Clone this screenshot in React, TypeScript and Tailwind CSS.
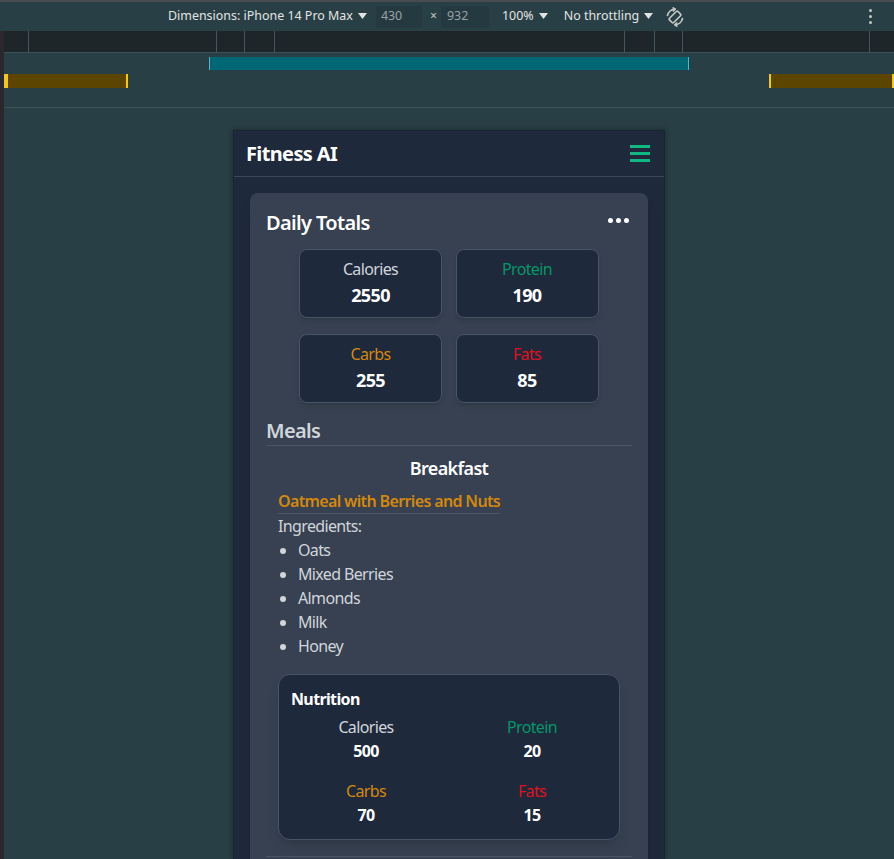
import React from 'react';

const ticks = [24, 212, 240, 270, 620, 650, 678, 865];

const totals = [
  { label: 'Calories', value: '2550', color: 'text-[#d1d5db]' },
  { label: 'Protein', value: '190', color: 'text-[#059669]' },
  { label: 'Carbs', value: '255', color: 'text-[#d4880b]' },
  { label: 'Fats', value: '85', color: 'text-[#e0111f]' },
];

const mealNutrition = [
  { label: 'Calories', value: '500', color: 'text-[#d1d5db]' },
  { label: 'Protein', value: '20', color: 'text-[#059669]' },
  { label: 'Carbs', value: '70', color: 'text-[#d4880b]' },
  { label: 'Fats', value: '15', color: 'text-[#e0111f]' },
];

const ingredients = ['Oats', 'Mixed Berries', 'Almonds', 'Milk', 'Honey'];

const Caret = () => (
  <svg width="9" height="6" viewBox="0 0 9 6" className="ml-[5px]">
    <path d="M0 0 L9 0 L4.5 6 Z" fill="#e3e3e3" />
  </svg>
);

const DevToolbar: React.FC = () => (
  <div className="h-[31px] bg-[#283f45] border-t-2 border-[#4a4d50] flex items-center pl-[168px] pr-[22px] text-[12.45px] tracking-normal text-[#e3e3e3]">
    <span className="flex items-center">
      Dimensions: iPhone 14 Pro Max
      <Caret />
    </span>
    <span className="ml-[9px] w-[46px] h-[22px] bg-[#243a40] text-[#9aa0a6] flex items-center pl-[5px]">430</span>
    <span className="ml-[8px] text-[#c4c7c5]">×</span>
    <span className="ml-[4px] w-[48px] h-[22px] bg-[#243a40] text-[#9aa0a6] flex items-center pl-[6px]">932</span>
    <span className="ml-[13px] flex items-center">
      100%
      <Caret />
    </span>
    <span className="ml-[16px] flex items-center">
      No throttling
      <Caret />
    </span>
    {/* rotate icon */}
    <svg width="22" height="22" viewBox="0 0 22 22" className="ml-[11px]" fill="none" stroke="#c4c7c5" strokeWidth="1.7" strokeLinecap="round">
      <rect x="8" y="5" width="6" height="12" rx="1.2" transform="rotate(45 11 11)" />
      <path d="M3.5 9.5 A7.8 7.8 0 0 1 11 3.2" />
      <path d="M11 3.2 L9.2 1.8 M11 3.2 L9.4 4.8" />
      <path d="M18.5 12.5 A7.8 7.8 0 0 1 11 18.8" />
      <path d="M11 18.8 L12.8 20.2 M11 18.8 L12.6 17.2" />
    </svg>
    <div className="ml-auto flex flex-col gap-[3px]">
      <span className="w-[3px] h-[3px] rounded-full bg-[#c4c7c5]" />
      <span className="w-[3px] h-[3px] rounded-full bg-[#c4c7c5]" />
      <span className="w-[3px] h-[3px] rounded-full bg-[#c4c7c5]" />
    </div>
  </div>
);

const Ruler: React.FC = () => (
  <div className="relative h-[22px] bg-[#1f2629] border-b border-[#3d5357]">
    {ticks.map((x) => (
      <div key={x} className="absolute top-0 bottom-0 w-px bg-[#44585c]" style={{ left: x }} />
    ))}
  </div>
);

const MediaBars: React.FC = () => (
  <div className="relative h-[55px] border-b border-[#3e565a]">
    <div className="absolute top-[4px] left-[205px] w-[480px] h-[13px] bg-[#006775] border-x border-[#4fb7c2]" />
    <div className="absolute top-[21px] left-0 w-[124px] h-[14px] bg-[#5c4500] border-l-4 border-r-2 border-[#f5c518]" />
    <div className="absolute top-[21px] left-[765px] w-[125px] h-[14px] bg-[#5c4500] border-x-2 border-[#f5c518]" />
  </div>
);

const StatBox = ({ label, value, color }: { label: string; value: string; color: string }) => (
  <div className="w-[143px] h-[69px] bg-[#1e293b] border border-[#475569] rounded-lg shadow-md flex flex-col items-center pt-[7px]">
    <span className={`text-base leading-6 ${color}`}>{label}</span>
    <span className="text-lg leading-7 font-bold text-white">{value}</span>
  </div>
);

const PhoneApp: React.FC = () => (
  <div className="w-[432px] mx-auto mt-[22px] bg-[#1e293b] border-x border-t border-[#1b2530] shadow-[0_0_6px_rgba(0,0,0,0.35)] h-[730px] overflow-hidden tracking-[-0.04em]">
    {/* Header */}
    <div className="h-[46px] flex items-center justify-between px-3 border-b border-[#3b4758]">
      <span className="text-xl font-bold text-white">Fitness AI</span>
      <div className="flex flex-col gap-[4px] mr-[2px]">
        <span className="w-[20px] h-[3px] bg-[#10b981]" />
        <span className="w-[20px] h-[3px] bg-[#10b981]" />
        <span className="w-[20px] h-[3px] bg-[#10b981]" />
      </div>
    </div>

    <div className="p-4">
      <div className="bg-[#374151] rounded-lg shadow-lg p-4 pb-10">
        <div className="flex items-center justify-between">
          <h2 className="text-xl leading-7 font-semibold text-white">Daily Totals</h2>
          <div className="flex gap-[3px] mr-[3px] -mt-[6px]">
            <span className="w-[5px] h-[5px] rounded-full bg-white" />
            <span className="w-[5px] h-[5px] rounded-full bg-white" />
            <span className="w-[5px] h-[5px] rounded-full bg-white" />
          </div>
        </div>

        <div className="mt-3 w-[300px] mx-auto grid grid-cols-2 gap-x-[13px] gap-y-4">
          {totals.map((t) => (
            <StatBox key={t.label} {...t} />
          ))}
        </div>

        <h2 className="mt-[14px] text-xl leading-7 font-semibold text-[#d1d5db] border-b border-[#4b5563]">Meals</h2>

        <div className="border-b border-[#4b5563] pb-4">
          <h3 className="mt-[8px] text-lg leading-7 font-semibold text-white text-center">Breakfast</h3>
          <div className="px-3 mt-[7px]">
            <span className="inline-block text-base leading-6 font-semibold text-[#d4880b] border-b border-[#4b5563]">
              Oatmeal with Berries and Nuts
            </span>
            <p className="text-base leading-6 text-[#d1d5db]">Ingredients:</p>
            <ul className="list-disc pl-5 text-base leading-6 text-[#d1d5db]">
              {ingredients.map((i) => (
                <li key={i}>{i}</li>
              ))}
            </ul>

            <div className="mt-4 bg-[#1e293b] border border-[#475569] rounded-xl shadow-lg p-3">
              <h4 className="text-base leading-6 font-bold text-white">Nutrition</h4>
              <div className="mt-1 grid grid-cols-2 gap-4">
                {mealNutrition.map((n) => (
                  <div key={n.label} className="flex flex-col items-center">
                    <span className={`text-base leading-6 ${n.color}`}>{n.label}</span>
                    <span className="text-base leading-6 font-bold text-white">{n.value}</span>
                  </div>
                ))}
              </div>
            </div>
          </div>
        </div>
      </div>
    </div>
  </div>
);

export default function App() {
  return (
    <div className="w-[894px] h-[859px] overflow-hidden bg-[#283f45] font-['Segoe_UI','Noto_Sans',sans-serif]">
      <DevToolbar />
      <div className="flex">
        <div className="w-[4px] h-[828px] bg-[#29292d]" />
        <div className="flex-1">
          <Ruler />
          <MediaBars />
          <PhoneApp />
        </div>
      </div>
    </div>
  );
}
